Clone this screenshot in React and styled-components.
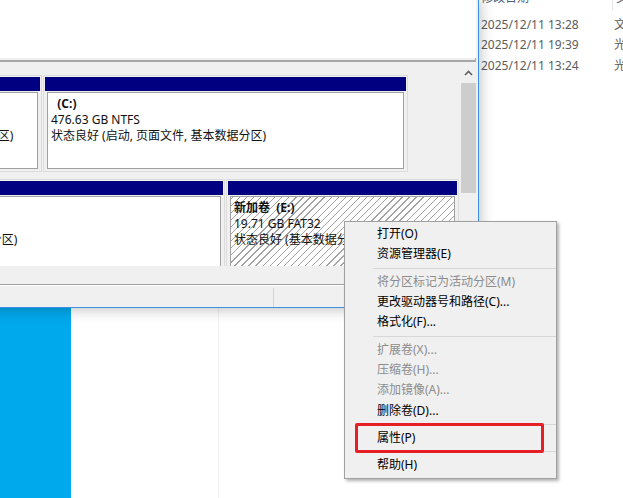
import React from 'react'
import styled, { createGlobalStyle } from 'styled-components'

const GlobalStyle = createGlobalStyle`
  html, body {
    margin: 0;
    padding: 0;
    background: #00a8ec;
  }
  body {
    width: 623px;
    height: 498px;
    overflow: hidden;
  }
`

const Desktop = styled.div`
  position: relative;
  width: 623px;
  height: 498px;
  overflow: hidden;
  background: #00a8ec;
  font-family: "Noto Sans", "Noto Sans CJK SC", sans-serif;
  font-size: 12px;
`

/* ---------- explorer window behind ---------- */

const Explorer = styled.div`
  position: absolute;
  left: 71px;
  top: -14px;
  width: 640px;
  height: 530px;
  background: #fff;
  display: flex;
`

const NavPane = styled.div`
  width: 147px;
  flex-shrink: 0;
  border-right: 1px solid #efefef;
`

const FileList = styled.div`
  flex: 1;
  min-width: 0;
  display: flex;
  flex-direction: column;
`

const Columns = styled.div`
  display: grid;
  grid-template-columns: 259px 135px 140px;
`

const HeaderRow = styled(Columns)`
  height: 24px;
  color: #4c607a;
`

const HeaderCell = styled.div`
  padding-left: 3px;
  line-height: 24px;
  border-right: 1px solid #e5e5e5;
  white-space: nowrap;
  overflow: hidden;
`

const Rows = styled.div`
  padding-top: 5px;
`

const FileRow = styled(Columns)`
  height: 20.3px;
  line-height: 20.3px;
  color: #5c5c5c;
`

const Cell = styled.div`
  padding-left: ${({ $pad }) => $pad ?? 3}px;
  white-space: nowrap;
  overflow: hidden;
`

/* ---------- disk management window ---------- */

const DiskWindow = styled.div`
  position: absolute;
  left: -260px;
  top: -1px;
  width: 739px;
  height: 309px;
  box-sizing: border-box;
  border: 1px solid #3c8ee0;
  background: #f0f0f0;
  display: flex;
  flex-direction: column;
  box-shadow: 0 0 14px rgba(0, 0, 0, 0.3);
  color: #111;
`

const VolumeList = styled.div`
  height: 58px;
  margin-right: 2px;
  background: #fff;
`

const Splitter = styled.div`
  height: 2px;
  margin-right: 2px;
  border-bottom: 2px solid #a7a7a7;
  border-right: 1px solid #a7a7a7;
`

const GraphPane = styled.div`
  height: 203px;
  margin: 1px 2px 0 0;
  display: flex;
  overflow: hidden;
`

const GraphRows = styled.div`
  flex: 1;
  padding-top: 12px;
  display: flex;
  flex-direction: column;
  gap: 7px;
`

const DiskRow = styled.div`
  display: flex;
  height: 97px;
  flex-shrink: 0;
`

const DiskLabel = styled.div`
  width: 134px;
  flex-shrink: 0;
  margin-right: 4px;
  padding: 16px 0 0 4px;
  box-sizing: border-box;
  line-height: 16px;
`

const Partition = styled.div`
  width: ${({ $w }) => $w}px;
  flex-shrink: 0;
  box-sizing: border-box;
  margin-right: 1px;
  border: 1px solid #dcdcdc;
  padding: 1px;
  display: flex;
  flex-direction: column;
`

const PartHeader = styled.div`
  height: 14px;
  background: #000080;
`

const PartBody = styled.div`
  flex: 1;
  margin: 1px 2px 1px 2px;
  border: 1px solid #a0a0a0;
  padding: 3px 3px;
  line-height: 16px;
  white-space: pre;
  overflow: hidden;
  background: ${({ $selected }) =>
    $selected
      ? 'repeating-linear-gradient(-45deg, #ffffff 0 4px, #a3a3a3 4px 5px)'
      : '#ffffff'};
`

const PartTitle = styled.div`
  font-weight: 700;
  height: 16px;
`

const Scrollbar = styled.div`
  width: 15px;
  flex-shrink: 0;
  display: flex;
  flex-direction: column;
`

const ScrollButton = styled.div`
  height: 20px;
  display: flex;
  align-items: center;
  justify-content: center;
`

const ScrollThumb = styled.div`
  height: 110px;
  background: #cdcdcd;
`

const Legend = styled.div`
  height: 18px;
`

const StatusBar = styled.div`
  height: 23px;
  box-sizing: border-box;
  border-top: 1px solid #a0a0a0;
  box-shadow: inset 0 1px 0 #ffffff;
  display: flex;
`

const StatusPane = styled.div`
  width: ${({ $w }) => $w}px;
  margin-top: 3px;
  border-right: 1px solid #d5d5d5;
`

/* ---------- context menu ---------- */

const Menu = styled.div`
  position: absolute;
  left: 344px;
  top: 221px;
  width: 213px;
  box-sizing: border-box;
  padding: 2px 0;
  background: #f0f0f0;
  border: 1px solid #a0a0a0;
  box-shadow: 2px 2px 3px rgba(0, 0, 0, 0.3);
`

const MenuItem = styled.div`
  height: 20.35px;
  line-height: 20.35px;
  padding-left: 32px;
  white-space: nowrap;
  color: ${({ $disabled }) => ($disabled ? '#8c8c8c' : '#000000')};
`

const MenuSep = styled.div`
  height: 7px;
  margin-left: 28px;
  display: flex;
  align-items: center;

  &::after {
    content: '';
    flex: 1;
    height: 1px;
    background: #d7d7d7;
  }
`

const Callout = styled.div`
  position: absolute;
  left: 10px;
  top: 201px;
  width: 189px;
  height: 30px;
  box-sizing: border-box;
  border: 3px solid #e61f26;
  border-radius: 2px;
`

const files = [
  { name: '新建文件夹', date: '2025/12/11 13:28', type: '文件夹' },
  { name: 'Windows.iso', date: '2025/12/11 19:39', type: '光盘映像文件' },
  { name: 'PE.iso', date: '2025/12/11 13:24', type: '光盘映像文件' },
]

const disks = [
  {
    label: ['磁盘 0', '基本', '476.94 GB', '联机'],
    parts: [
      { w: 163, lines: ['', '100 MB', '状态良好 (EFI 系统分区)'] },
      { w: 365, lines: ['  (C:)', '476.63 GB NTFS', '状态良好 (启动, 页面文件, 基本数据分区)'] },
    ],
  },
  {
    label: ['磁盘 1', '可移动', '950.00 GB', '联机'],
    parts: [
      { w: 346, lines: ['新加卷  (D:)', '930.29 GB NTFS', '状态良好 (基本数据分区)'] },
      { w: 233, selected: true, lines: ['新加卷  (E:)', '19.71 GB FAT32', '状态良好 (基本数据分区)'] },
    ],
  },
]

const menu = [
  { label: '打开(O)' },
  { label: '资源管理器(E)' },
  'sep',
  { label: '将分区标记为活动分区(M)', disabled: true },
  { label: '更改驱动器号和路径(C)...' },
  { label: '格式化(F)...' },
  'sep',
  { label: '扩展卷(X)...', disabled: true },
  { label: '压缩卷(H)...', disabled: true },
  { label: '添加镜像(A)...', disabled: true },
  { label: '删除卷(D)...' },
  'sep',
  { label: '属性(P)' },
  'sep',
  { label: '帮助(H)' },
]

function UpArrow() {
  return (
    <svg width="9" height="6" viewBox="0 0 9 6">
      <polyline points="1,5 4.5,1.5 8,5" fill="none" stroke="#606060" strokeWidth="1.6" />
    </svg>
  )
}

export default function App() {
  return (
    <Desktop>
      <GlobalStyle />

      <Explorer>
        <NavPane />
        <FileList>
          <HeaderRow>
            <HeaderCell>名称</HeaderCell>
            <HeaderCell>修改日期</HeaderCell>
            <HeaderCell>类型</HeaderCell>
          </HeaderRow>
          <Rows>
            {files.map((f) => (
              <FileRow key={f.date}>
                <Cell>{f.name}</Cell>
                <Cell>{f.date}</Cell>
                <Cell $pad={1}>{f.type}</Cell>
              </FileRow>
            ))}
          </Rows>
        </FileList>
      </Explorer>

      <DiskWindow>
        <VolumeList />
        <Splitter />
        <GraphPane>
          <GraphRows>
            {disks.map((d) => (
              <DiskRow key={d.label[0]}>
                <DiskLabel>
                  {d.label.map((l) => (
                    <div key={l}>{l}</div>
                  ))}
                </DiskLabel>
                {d.parts.map((p) => (
                  <Partition key={p.lines[2] + p.w} $w={p.w}>
                    <PartHeader />
                    <PartBody $selected={p.selected}>
                      <PartTitle>{p.lines[0]}</PartTitle>
                      <div>{p.lines[1]}</div>
                      <div>{p.lines[2]}</div>
                    </PartBody>
                  </Partition>
                ))}
              </DiskRow>
            ))}
          </GraphRows>
          <Scrollbar>
            <ScrollButton>
              <UpArrow />
            </ScrollButton>
            <ScrollThumb />
          </Scrollbar>
        </GraphPane>
        <Legend />
        <StatusBar>
          <StatusPane $w={532} />
        </StatusBar>
      </DiskWindow>

      <Menu>
        {menu.map((m, i) =>
          m === 'sep' ? (
            <MenuSep key={i} />
          ) : (
            <MenuItem key={i} $disabled={m.disabled}>
              {m.label}
            </MenuItem>
          )
        )}
        <Callout />
      </Menu>
    </Desktop>
  )
}
